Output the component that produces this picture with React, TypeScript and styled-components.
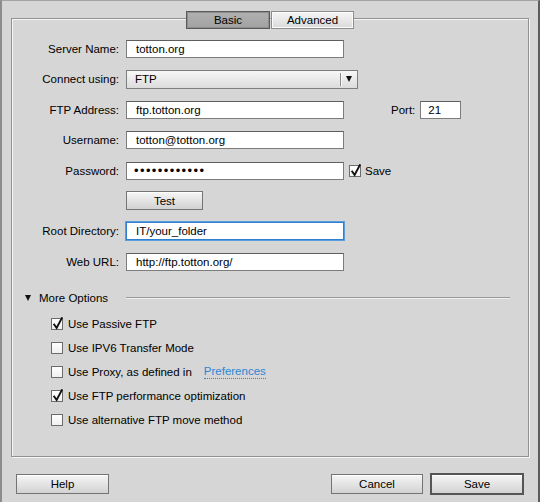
import styled, { createGlobalStyle, css } from "styled-components";

const GlobalStyle = createGlobalStyle`
  body {
    margin: 0;
    background: #d6d6d6;
    font-family: "Liberation Sans", Arial, sans-serif;
    font-size: 11.5px;
    color: #000;
  }
`;

export const Window = styled.div`
  width: 540px;
  height: 502px;
  box-sizing: border-box;
  background: #d6d6d6;
  border-top: 1px solid #a4a4a4;
  border-left: 2px solid #8c8c8c;
  border-right: 2px solid #5c5c5c;
  padding: 17px 9px 0;
  display: flex;
  flex-direction: column;
`;

export const GroupBox = styled.div`
  height: 439px;
  box-sizing: border-box;
  border: 1px solid #919191;
  box-shadow: inset 1px 1px 0 #f6f6f6, 1px 1px 0 #f6f6f6;
  display: flex;
  flex-direction: column;
`;

export const TabBar = styled.div`
  display: flex;
  justify-content: center;
  gap: 1px;
  margin-top: -8px;
  height: 18px;
`;

export const Tab = styled.div<{ $active?: boolean }>`
  box-sizing: border-box;
  width: ${(p) => (p.$active ? 84 : 83)}px;
  height: 18px;
  display: flex;
  align-items: center;
  justify-content: center;
  ${(p) =>
    p.$active
      ? css`
          border: 1px solid #5a5a5a;
          box-shadow: inset 0 0 0 1px #8e8e8e;
          background: linear-gradient(#b0b0b0, #a2a2a2);
        `
      : css`
          border: 1px solid #8e8e8e;
          box-shadow: inset 0 0 0 1px #fbfbfb;
          background: linear-gradient(#f6f6f6, #dadada);
        `}
`;

export const Form = styled.div`
  display: grid;
  grid-template-columns: 107px auto;
  column-gap: 7px;
  row-gap: 12.4px;
  padding-top: 11px;
`;

export const Label = styled.div`
  height: 18px;
  display: flex;
  align-items: center;
  justify-content: flex-end;
  white-space: nowrap;
`;

export const Field = styled.div`
  height: 18px;
  display: flex;
  align-items: center;
`;

export const TextBox = styled.div<{ $width?: number; $focused?: boolean }>`
  box-sizing: border-box;
  width: ${(p) => p.$width ?? 218}px;
  height: 18px;
  background: #fff;
  border: 1px solid #7c7c7c;
  border-top-color: #5e5e5e;
  padding-left: 9px;
  display: flex;
  align-items: center;
  white-space: nowrap;
  ${(p) =>
    p.$focused &&
    css`
      border-color: #2f7fcf;
      box-shadow: 0 0 0 1px #5a9ee0;
    `}
`;

export const Dots = styled.span`
  letter-spacing: 1.4px;
  font-size: 13px;
  margin-left: -2px;
`;

export const Select = styled.div`
  box-sizing: border-box;
  width: 232px;
  height: 19px;
  border: 1px solid #7e7e7e;
  background: linear-gradient(#f7f7f7, #dcdcdc);
  display: flex;
  align-items: center;
  padding-left: 8px;
`;

export const SelectValue = styled.span`
  flex: 1;
`;

export const SelectArrow = styled.div`
  width: 16px;
  height: 13px;
  border-left: 1px solid #8c8c8c;
  box-shadow: inset 1px 0 0 #fafafa;
  display: flex;
  align-items: center;
  justify-content: center;

  &::after {
    content: "";
    border-left: 3.5px solid transparent;
    border-right: 3.5px solid transparent;
    border-top: 6px solid #111;
  }
`;

export const PortLabel = styled.span`
  margin-left: 47px;
  margin-right: 5px;
`;

export const Button = styled.button<{ $width: number; $default?: boolean }>`
  box-sizing: border-box;
  width: ${(p) => p.$width}px;
  height: ${(p) => (p.$default ? 22 : 20)}px;
  padding: 0;
  font: inherit;
  color: #000;
  border: ${(p) => (p.$default ? "2px solid #555" : "1px solid #747474")};
  background: linear-gradient(#f6f6f6, #d2d2d2);
  box-shadow: inset 0 1px 0 #fff;
  display: flex;
  align-items: center;
  justify-content: center;
`;

export const BoxMark = styled.span`
  position: relative;
  box-sizing: border-box;
  width: 12px;
  height: 12px;
  flex: none;
  border: 1px solid #6c6c6c;
  background: linear-gradient(#ffffff, #f0f0f0);

  svg {
    position: absolute;
    left: 0px;
    top: -2px;
  }
`;

export const CheckRow = styled.label<{ $gap?: number }>`
  display: flex;
  align-items: center;
  gap: ${(p) => p.$gap ?? 5}px;
  white-space: nowrap;
`;

export const SaveCheck = styled(CheckRow)`
  margin-left: 5px;
`;

export const MoreHeader = styled.div`
  display: flex;
  align-items: center;
  height: 14px;
  margin-top: 20px;
  padding-left: 13px;
  margin-right: 18px;
`;

export const Caret = styled.span`
  width: 0;
  height: 0;
  border-left: 3.5px solid transparent;
  border-right: 3.5px solid transparent;
  border-top: 6px solid #111;
  margin-right: 8px;
`;

export const Rule = styled.span`
  flex: 1;
  height: 1px;
  margin-left: 18px;
  background: #9a9a9a;
  box-shadow: 0 1px 0 #efefef;
`;

export const OptionList = styled.div`
  display: flex;
  flex-direction: column;
  margin-top: 7px;
  padding-left: 39px;
`;

export const OptionItem = styled.div`
  height: 24px;
  display: flex;
  align-items: center;
`;

export const Link = styled.span`
  margin-left: 7px;
  color: #2a87d4;
  border-bottom: 1px dotted #2a87d4;
  line-height: 13px;
`;

export const Footer = styled.div`
  display: flex;
  align-items: center;
  margin-top: 16px;
  padding: 0 5px;
  gap: 7px;
`;

export const Spacer = styled.div`
  flex: 1;
`;

const Check = ({ checked }: { checked?: boolean }) => (
  <BoxMark>
    {checked && (
      <svg width="12" height="13" viewBox="0 0 12 13">
        <path
          d="M2.2 7.6 L4.6 11 L9.8 1.2"
          fill="none"
          stroke="#111"
          strokeWidth="1.9"
          strokeLinecap="square"
          strokeLinejoin="miter"
        />
      </svg>
    )}
  </BoxMark>
);

const options = [
  { text: "Use Passive FTP", checked: true },
  { text: "Use IPV6 Transfer Mode", checked: false },
  { text: "Use Proxy, as defined in", checked: false, link: "Preferences" },
  { text: "Use FTP performance optimization", checked: true },
  { text: "Use alternative FTP move method", checked: false },
];

const App = () => {
  return (
    <>
      <GlobalStyle />
      <Window>
        <GroupBox>
          <TabBar>
            <Tab $active>Basic</Tab>
            <Tab>Advanced</Tab>
          </TabBar>
          <Form>
            <Label>Server Name:</Label>
            <Field>
              <TextBox>totton.org</TextBox>
            </Field>

            <Label>Connect using:</Label>
            <Field>
              <Select>
                <SelectValue>FTP</SelectValue>
                <SelectArrow />
              </Select>
            </Field>

            <Label>FTP Address:</Label>
            <Field>
              <TextBox>ftp.totton.org</TextBox>
              <PortLabel>Port:</PortLabel>
              <TextBox $width={41} style={{ paddingLeft: 7 }}>
                21
              </TextBox>
            </Field>

            <Label>Username:</Label>
            <Field>
              <TextBox>totton@totton.org</TextBox>
            </Field>

            <Label>Password:</Label>
            <Field>
              <TextBox>
                <Dots>••••••••••••</Dots>
              </TextBox>
              <SaveCheck $gap={4}>
                <Check checked />
                Save
              </SaveCheck>
            </Field>

            <Label />
            <Field>
              <Button $width={77} style={{ height: 19 }}>
                Test
              </Button>
            </Field>

            <Label>Root Directory:</Label>
            <Field>
              <TextBox $focused>IT/your_folder</TextBox>
            </Field>

            <Label>Web URL:</Label>
            <Field>
              <TextBox>http://ftp.totton.org/</TextBox>
            </Field>
          </Form>

          <MoreHeader>
            <Caret />
            More Options
            <Rule />
          </MoreHeader>

          <OptionList>
            {options.map((o) => (
              <OptionItem key={o.text}>
                <CheckRow>
                  <Check checked={o.checked} />
                  {o.text}
                  {o.link && <Link>{o.link}</Link>}
                </CheckRow>
              </OptionItem>
            ))}
          </OptionList>
        </GroupBox>

        <Footer>
          <Button $width={93}>Help</Button>
          <Spacer />
          <Button $width={92}>Cancel</Button>
          <Button $width={94} $default>
            Save
          </Button>
        </Footer>
      </Window>
    </>
  );
};

export default App;
